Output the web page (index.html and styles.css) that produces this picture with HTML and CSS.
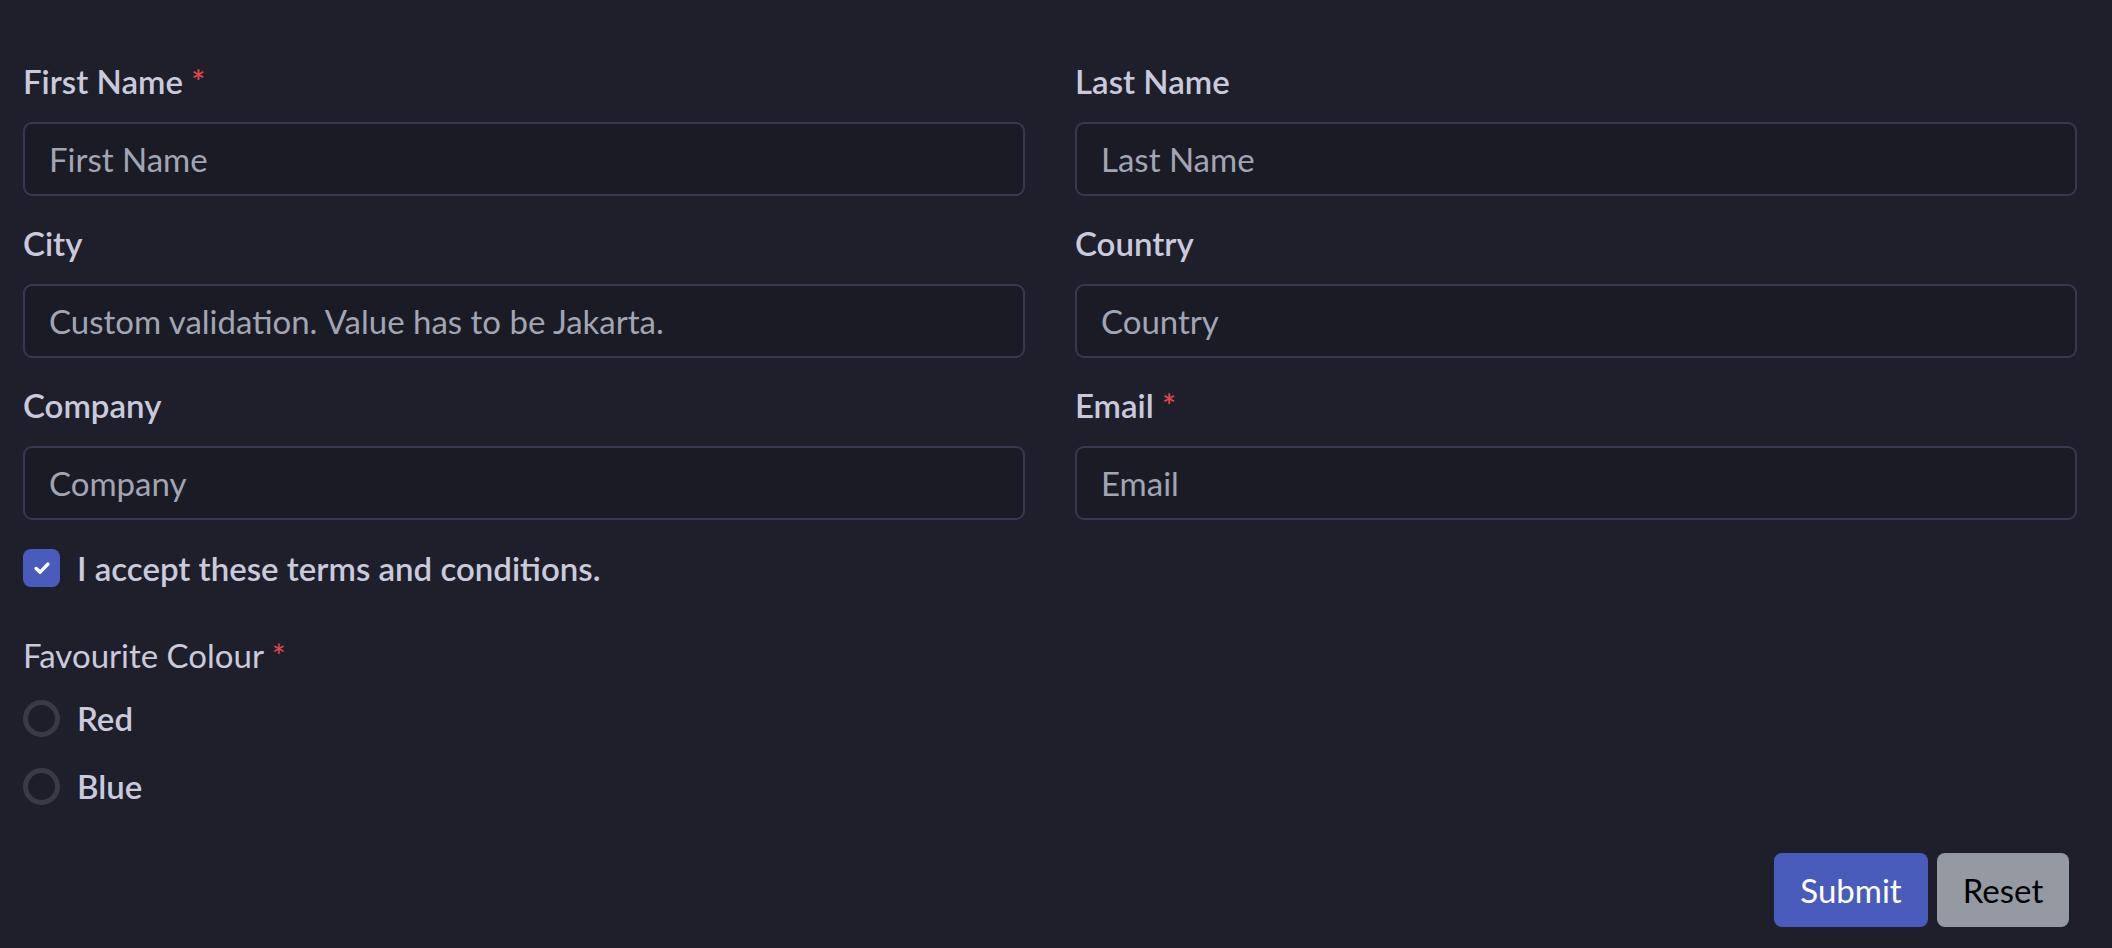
FILE: index.html
```html
<!DOCTYPE html>
<html lang="en">
<head>
<meta charset="utf-8">
<title>Form</title>
<link rel="stylesheet" href="styles.css">
</head>
<body>
<form class="form">
  <div class="grid">
    <div class="field">
      <label class="label">First Name <span class="req">*</span></label>
      <input class="input" type="text" placeholder="First Name">
    </div>
    <div class="field">
      <label class="label">Last Name</label>
      <input class="input" type="text" placeholder="Last Name">
    </div>
    <div class="field">
      <label class="label">City</label>
      <input class="input" type="text" placeholder="Custom validation. Value has to be Jakarta.">
    </div>
    <div class="field">
      <label class="label">Country</label>
      <input class="input" type="text" placeholder="Country">
    </div>
    <div class="field">
      <label class="label">Company</label>
      <input class="input" type="text" placeholder="Company">
    </div>
    <div class="field">
      <label class="label">Email <span class="req">*</span></label>
      <input class="input" type="text" placeholder="Email">
    </div>
  </div>

  <div class="check-row">
    <span class="checkbox">
      <svg viewBox="0 0 16 16" width="20" height="20"><path d="M3.3 8.4 L6.5 11.3 L12.7 4.9" fill="none" stroke="#fff" stroke-width="2.8" stroke-linecap="round" stroke-linejoin="round"/></svg>
    </span>
    <span class="check-text">I accept these terms and conditions.</span>
  </div>

  <div class="colour">
    <div class="colour-label">Favourite Colour <span class="req">*</span></div>
    <div class="radio-row"><span class="radio"></span><span class="radio-text">Red</span></div>
    <div class="radio-row"><span class="radio"></span><span class="radio-text">Blue</span></div>
  </div>

  <div class="actions">
    <button type="button" class="btn btn-primary">Submit</button>
    <button type="button" class="btn btn-secondary">Reset</button>
  </div>
</form>
</body>
</html>
```

FILE: styles.css
```css
* { box-sizing: border-box; }
html, body {
  margin: 0;
  padding: 0;
  background: #1f1f2c;
  height: 100%;
}
body {
  font-family: Lato, "Noto Sans", sans-serif;
  color: #c9c9db;
}
.form {
  padding: 57px 35px 0 23px;
}
.grid {
  display: grid;
  grid-template-columns: 1fr 1fr;
  column-gap: 50px;
  row-gap: 23px;
}
.field {
  display: flex;
  flex-direction: column;
  gap: 17px;
}
.label {
  font-size: 33px;
  line-height: 48px;
  font-weight: 600;
  color: #cacadc;
}
.req {
  color: #e0464c;
}
.input {
  height: 74px;
  background: #1b1b26;
  border: 2px solid #383850;
  border-radius: 9px;
  padding: 0 24px;
  font-family: inherit;
  font-size: 33px;
  color: #c9c9db;
  outline: none;
}
.input::placeholder {
  color: #a2a5b3;
}
.check-row {
  display: flex;
  align-items: center;
  gap: 17px;
  margin-top: 29px;
  height: 38px;
}
.checkbox {
  width: 37px;
  height: 38px;
  border-radius: 8px;
  background: #4a5cbb;
  display: flex;
  align-items: center;
  justify-content: center;
}
.check-text {
  font-size: 33px;
  font-weight: 600;
  color: #cacadc;
}
.colour {
  margin-top: 44px;
  display: flex;
  flex-direction: column;
}
.colour-label {
  font-size: 33px;
  line-height: 48px;
  color: #cacadc;
}
.radio-row {
  display: flex;
  align-items: center;
  gap: 17px;
  height: 38px;
  margin-top: 20px;
}
.radio-row + .radio-row {
  margin-top: 30px;
}
.radio {
  width: 37px;
  height: 37px;
  border-radius: 50%;
  border: 5px solid #3a3a44;
  background: #1e1e2a;
}
.radio-text {
  font-size: 33px;
  font-weight: 600;
  color: #cacadc;
}
.actions {
  display: flex;
  justify-content: flex-end;
  gap: 9px;
  margin-top: 48px;
  padding-right: 8px;
}
.btn {
  height: 74px;
  border: none;
  border-radius: 8px;
  font-family: inherit;
  font-size: 33px;
  padding: 0 20px;
}
.btn-primary {
  background: #4a5cbb;
  color: #ffffff;
  width: 154px;
}
.btn-secondary {
  background: #959aa2;
  color: #000000;
  width: 132px;
}
```
